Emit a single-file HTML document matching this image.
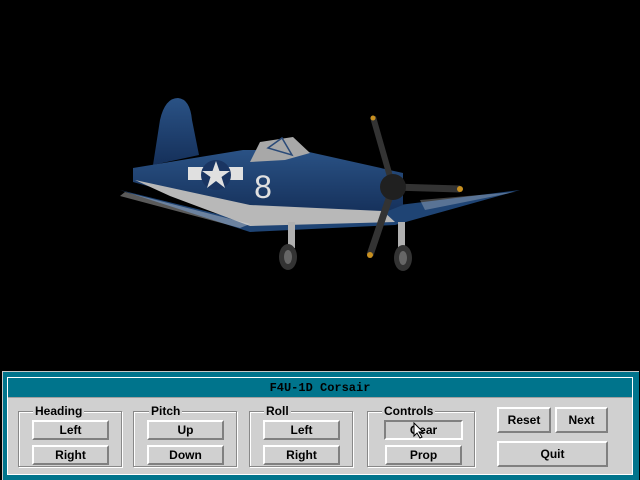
<!DOCTYPE html>
<html><head><style>
body{margin:0;width:640px;height:480px;background:#000;position:relative;overflow:hidden;font-family:"Liberation Sans",sans-serif}
.abs{position:absolute;box-sizing:border-box}
#outer{left:2px;top:371px;width:637px;height:109px;background:#00748c;border-top:1px solid #c8c8c8;border-left:1px solid #c8c8c8}
#inner{left:7px;top:377px;width:626px;height:98px;border:1px solid #fff;background:#d0d0d0}
#title{left:8px;top:378px;width:624px;height:20px;background:#00748c;color:#000;font-weight:bold;font-size:12px;text-align:center;line-height:20px;border-bottom:1px solid #a0a0a0;font-family:"Liberation Mono",monospace}
.grp{border:1px solid #888;box-shadow:1px 1px 0 #fff inset,1px 1px 0 #fff}
.lg{background:#d0d0d0;font-weight:bold;font-size:12px;padding:0 2px;line-height:12px;color:#000}
.btn{background:#d0d0d0;border:2px solid;border-color:#fff #808080 #808080 #fff;font-weight:bold;font-size:12px;text-align:center;color:#000}
.dn{border-color:#808080 #fff #fff #808080}
</style></head><body>
<svg class="abs" style="left:0;top:0" width="640" height="370">
<defs><linearGradient id="b" x1="0" y1="0" x2="0" y2="1"><stop offset="0" stop-color="#2a5285"/><stop offset="1" stop-color="#15305a"/></linearGradient></defs>
<path d="M153,165 L160,120 Q165,98 178,98 Q190,99 192,120 L199,155 Z" fill="url(#b)"/>
<polygon points="120,190 250,222 383,207 520,190 395,225 250,232" fill="#1f4474"/>
<polygon points="133,168 243,150 300,150 403,173 403,205 383,213 250,214 180,195 133,182" fill="url(#b)"/>
<polygon points="135,180 250,205 383,211 395,222 250,226 170,196" fill="#b8b8b8"/>
<polygon points="250,162 260,142 293,137 310,153 285,160" fill="#a8a8a8"/>
<polygon points="268,148 282,138 292,155" fill="none" stroke="#2a4a78" stroke-width="1.5"/>
<rect x="188" y="167" width="55" height="13" fill="#e0e0e0"/>
<circle cx="216" cy="175" r="15" fill="#1a3562"/>
<polygon points="216,161 219.5,171 230,171 221.5,177 225,188 216,181 207,188 210.5,177 202,171 212.5,171" fill="#e0e0e0"/>
<text x="263" y="198" fill="#e0e0e0" font-size="32" font-family="Liberation Sans" text-anchor="middle">8</text>
<polygon points="125,192 250,224 240,228 120,196" fill="#e0e0e0" opacity=".4"/>
<polygon points="420,200 515,192 425,210" fill="#e0e0e0" opacity=".3"/>
<rect x="288" y="222" width="7" height="26" fill="#b0b0b0"/>
<rect x="398" y="222" width="7" height="26" fill="#b0b0b0"/>
<ellipse cx="288" cy="257" rx="9" ry="13" fill="#333"/><ellipse cx="288" cy="257" rx="4" ry="7" fill="#666"/>
<ellipse cx="403" cy="258" rx="9" ry="13" fill="#333"/><ellipse cx="403" cy="258" rx="4" ry="7" fill="#666"/>
<line x1="373" y1="117" x2="393" y2="187" stroke="#333" stroke-width="6"/>
<line x1="393" y1="187" x2="370" y2="255" stroke="#333" stroke-width="7"/>
<line x1="393" y1="187" x2="460" y2="189" stroke="#333" stroke-width="7"/>
<circle cx="393" cy="187" r="13" fill="#202020"/>
<circle cx="373" cy="118" r="2.5" fill="#c89020"/><circle cx="370" cy="255" r="3" fill="#c89020"/><circle cx="460" cy="189" r="3" fill="#c89020"/>
</svg>
<div id="outer" class="abs"></div>
<div id="inner" class="abs"></div>
<div id="title" class="abs">F4U-1D Corsair</div>

<div class="abs grp" style="left:18px;top:411px;width:104px;height:56px"></div>
<div class="abs lg" style="left:33px;top:405px">Heading</div>
<div class="abs grp" style="left:133px;top:411px;width:104px;height:56px"></div>
<div class="abs lg" style="left:149px;top:405px">Pitch</div>
<div class="abs grp" style="left:249px;top:411px;width:104px;height:56px"></div>
<div class="abs lg" style="left:264px;top:405px">Roll</div>
<div class="abs grp" style="left:367px;top:411px;width:108px;height:56px"></div>
<div class="abs lg" style="left:382px;top:405px">Controls</div>

<div class="abs btn" style="left:32px;top:420px;width:77px;height:20px;line-height:16px">Left</div>
<div class="abs btn" style="left:32px;top:445px;width:77px;height:20px;line-height:16px">Right</div>
<div class="abs btn" style="left:147px;top:420px;width:77px;height:20px;line-height:16px">Up</div>
<div class="abs btn" style="left:147px;top:445px;width:77px;height:20px;line-height:16px">Down</div>
<div class="abs btn" style="left:263px;top:420px;width:77px;height:20px;line-height:16px">Left</div>
<div class="abs btn" style="left:263px;top:445px;width:77px;height:20px;line-height:16px">Right</div>
<div class="abs btn dn" style="left:384px;top:420px;width:79px;height:20px;line-height:16px">Gear</div>
<div class="abs btn" style="left:385px;top:445px;width:77px;height:20px;line-height:16px">Prop</div>
<div class="abs btn" style="left:497px;top:407px;width:54px;height:26px;line-height:22px">Reset</div>
<div class="abs btn" style="left:555px;top:407px;width:53px;height:26px;line-height:22px">Next</div>
<div class="abs btn" style="left:497px;top:441px;width:111px;height:26px;line-height:22px">Quit</div>
<svg class="abs" style="left:413px;top:422px" width="12" height="18"><polygon points="1,1 1,14 4,11 7,16 9,15 6,10 10,10" fill="#fff" stroke="#000"/></svg>
</body></html>
